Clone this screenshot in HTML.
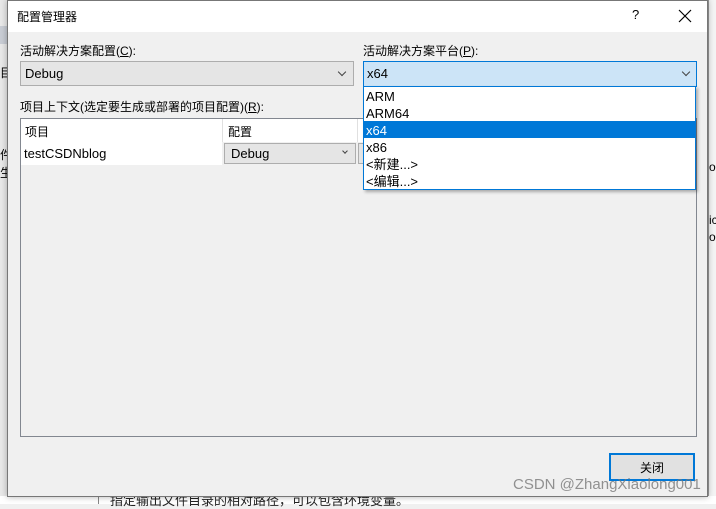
<!DOCTYPE html><html><head><meta charset="utf-8"><style>
*{margin:0;padding:0;box-sizing:border-box}
body{width:716px;height:504px;overflow:hidden;background:#f0f0f0;position:relative;font-family:"Liberation Sans","Noto Sans CJK SC",sans-serif;font-size:12px;color:#000}
.a{position:absolute}
.chev{position:absolute;width:6px;height:6px;border-right:1px solid #444;border-bottom:1px solid #444;transform:rotate(45deg)}
</style></head><body>
<div class="a" style="left:0;top:0;width:7px;height:504px;background:#e8e8e8"></div>
<div class="a" style="left:0;top:26px;width:7px;height:18px;background:#c8ccd4"></div>
<div class="a" style="left:0;top:64px;font-size:12px">目</div>
<div class="a" style="left:0;top:146px">件</div>
<div class="a" style="left:0;top:164px">生</div>
<div class="a" style="left:708px;top:0;width:8px;height:504px;background:#f4f4f4;border-left:1px solid #999"></div>
<div class="a" style="left:709px;top:160px">o</div>
<div class="a" style="left:709px;top:213px">ic</div>
<div class="a" style="left:709px;top:230px">o</div>
<div class="a" style="left:0;top:496px;width:716px;height:8px;background:#fff"></div>
<div class="a" style="left:98px;top:496px;width:1px;height:8px;background:#888"></div>
<div class="a" style="left:110px;top:490px;font-size:13px;color:#222">指定输出文件目录的相对路径，可以包含环境变量。</div>
<div class="a" style="left:7px;top:0;width:701px;height:497px;background:#f0f0f0;border:1px solid #777;box-shadow:0 0 6px rgba(0,0,0,.3)">
<div class="a" style="left:0;top:0;width:699px;height:31px;background:#fff"></div>
<div class="a" style="left:9px;top:7px;font-size:12px">配置管理器</div>
<div class="a" style="left:624px;top:6px;font-size:13px">?</div>
<svg class="a" style="left:670px;top:8px" width="14" height="14"><path d="M1 1L13 13M13 1L1 13" stroke="#000" stroke-width="1.2"/></svg>
</div>
<div class="a" style="left:20px;top:42px">活动解决方案配置(<u>C</u>):</div>
<div class="a" style="left:20px;top:61px;width:334px;height:25px;background:#e5e5e5;border:1px solid #adadad"></div>
<div class="a" style="left:25px;top:66px;font-size:13px">Debug</div>
<div class="chev" style="left:339px;top:69px"></div>
<div class="a" style="left:363px;top:42px">活动解决方案平台(<u>P</u>):</div>
<div class="a" style="left:363px;top:61px;width:334px;height:26px;background:#cce4f7;border:1px solid #0078d7"></div>
<div class="a" style="left:367px;top:66px;font-size:13px">x64</div>
<div class="chev" style="left:683px;top:69px"></div>
<div class="a" style="left:20px;top:98px">项目上下文(选定要生成或部署的项目配置)(<u>R</u>):</div>
<div class="a" style="left:20px;top:118px;width:677px;height:319px;border:1px solid #828790;background:#f0f0f0"></div>
<div class="a" style="left:21px;top:119px;width:675px;height:23px;background:#fff"></div>
<div class="a" style="left:222px;top:119px;width:1px;height:23px;background:#e0e0e0"></div>
<div class="a" style="left:357px;top:119px;width:1px;height:23px;background:#e0e0e0"></div>
<div class="a" style="left:25px;top:123px">项目</div>
<div class="a" style="left:228px;top:123px">配置</div>
<div class="a" style="left:21px;top:142px;width:201px;height:23px;background:#fff"></div>
<div class="a" style="left:24px;top:146px;font-size:13px">testCSDNblog</div>
<div class="a" style="left:224px;top:143px;width:132px;height:21px;background:#e5e5e5;border:1px solid #adadad"></div>
<div class="a" style="left:231px;top:146px;font-size:13px">Debug</div>
<div class="chev" style="left:343px;top:149px;width:4px;height:4px"></div>
<div class="a" style="left:358px;top:143px;width:6px;height:21px;background:#e5e5e5;border:1px solid #adadad"></div>
<div class="a" style="left:363px;top:86px;width:333px;height:104px;background:#fff;border:1px solid #0078d7;box-shadow:2px 2px 3px rgba(0,0,0,.3)"></div>
<div class="a" style="left:364px;top:121px;width:331px;height:17px;background:#0078d7"></div>
<div class="a" style="left:366px;top:88px;font-size:13px;line-height:17px">ARM<br>ARM64<br><span style="color:#fff">x64</span><br>x86<br>&lt;新建...&gt;<br>&lt;编辑...&gt;</div>
<div class="a" style="left:609px;top:453px;width:86px;height:28px;background:#e1e1e1;border:2px solid #0078d7"></div>
<div class="a" style="left:640px;top:459px">关闭</div>
<div class="a" style="left:513px;top:476px;font-size:15px;color:rgba(120,120,120,.8)">CSDN @ZhangXiaolong001</div>
</body></html>
